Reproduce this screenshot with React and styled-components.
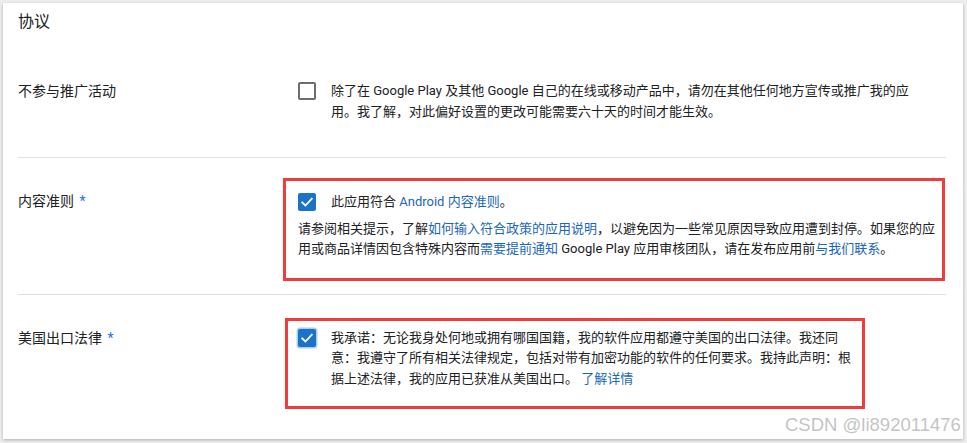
import React from 'react';
import styled, { createGlobalStyle } from 'styled-components';

const GlobalStyle = createGlobalStyle`
  html, body {
    margin: 0;
    padding: 0;
    background: #eeeeee;
  }
  body {
    font-family: Roboto, "Noto Sans CJK SC", sans-serif;
    color: #202124;
  }
`;

export default function App() {
  return (
    <Page>
      <GlobalStyle />
      <Card>
        <Title>协议</Title>

        <Row $top={47} $bottom={35} $divider>
          <Label $offset={0}>不参与推广活动</Label>
          <Plain>
            <CheckRow>
              <Checkbox />
              <CheckText>
                除了在 Google Play 及其他 Google 自己的在线或移动产品中，请勿在其他任何地方宣传或推广我的应用。我了解，对此偏好设置的更改可能需要六十天的时间才能生效。
              </CheckText>
            </CheckRow>
          </Plain>
        </Row>

        <Row $top={20} $bottom={13} $divider>
          <Label $offset={13}>
            内容准则 <Required>*</Required>
          </Label>
          <Highlight $pad="11px 3px 18px 12px" $shift={0} $width={662}>
            <CheckRow>
              <Checkbox checked />
              <CheckText>
                此应用符合 <Link>Android 内容准则</Link>。
              </CheckText>
            </CheckRow>
            <Note>
              请参阅相关提示，了解<Link>如何输入符合政策的应用说明</Link>，以避免因为一些常见原因导致应用遭到封停。如果您的应用或商品详情因包含特殊内容而<Link>需要提前通知</Link> Google Play 应用审核团队，请在发布应用前<Link>与我们联系</Link>。
            </Note>
          </Highlight>
        </Row>

        <Row $top={23} $bottom={30}>
          <Label $offset={10}>
            美国出口法律 <Required>*</Required>
          </Label>
          <Highlight $pad="7px 9px 16.5px 10px" $shift={2} $width={580}>
            <CheckRow>
              <Checkbox checked focused />
              <CheckText>
                我承诺：无论我身处何地或拥有哪国国籍，我的软件应用都遵守美国的出口法律。我还同意：我遵守了所有相关法律规定，包括对带有加密功能的软件的任何要求。我持此声明：根据上述法律，我的应用已获准从美国出口。 <Link>了解详情</Link>
              </CheckText>
            </CheckRow>
          </Highlight>
        </Row>
      </Card>
      <Watermark>CSDN @li892011476</Watermark>
    </Page>
  );
}

function Checkbox({ checked, focused }) {
  return (
    <Box $checked={checked} $focused={focused}>
      {checked && (
        <svg width="18" height="18" viewBox="0 0 18 18">
          <path d="M4.2 9.4 L7.4 12.5 L13.8 5.8" fill="none" stroke="#fff" strokeWidth="1.8" strokeLinecap="square" />
        </svg>
      )}
    </Box>
  );
}

const Page = styled.div`
  position: relative;
  width: 967px;
  height: 443px;
  padding: 3px 0 0 3px;
  box-sizing: border-box;
  overflow: hidden;
`;

const Card = styled.section`
  width: 960px;
  box-sizing: border-box;
  padding: 7px 17px 0 15px;
  background: #ffffff;
  box-shadow: 0 1px 3px rgba(0, 0, 0, 0.28);
`;

const Title = styled.h2`
  margin: 0;
  font-size: 16px;
  line-height: 24px;
  font-weight: 400;
  color: #202124;
`;

const Row = styled.div`
  display: grid;
  grid-template-columns: 265px 1fr;
  align-items: start;
  padding-top: ${(p) => p.$top}px;
  padding-bottom: ${(p) => p.$bottom}px;
  border-bottom: ${(p) => (p.$divider ? '1px solid #e0e0e0' : 'none')};
`;

const Label = styled.div`
  margin-top: ${(p) => p.$offset}px;
  font-size: 14px;
  line-height: 20.5px;
  color: #202124;
`;

const Required = styled.span`
  color: #1a73e8;
  margin-left: 2px;
`;

const Plain = styled.div`
  padding: 0 31px 0 15px;
`;

const Highlight = styled.div`
  box-sizing: border-box;
  width: ${(p) => p.$width}px;
  margin-left: ${(p) => p.$shift}px;
  padding: ${(p) => p.$pad};
  border: 3px solid #f23b3b;
`;

const CheckRow = styled.div`
  display: flex;
  align-items: flex-start;
  gap: 15px;
`;

const Box = styled.span`
  flex: none;
  display: flex;
  width: 18px;
  height: 18px;
  margin-top: 1px;
  box-sizing: border-box;
  border-radius: 2px;
  border: ${(p) => (p.$checked ? 'none' : '2px solid #6e6e6e')};
  background: ${(p) => (p.$checked ? '#1a73c8' : '#ffffff')};
  box-shadow: ${(p) => (p.$focused ? '0 0 0 1.5px rgba(26, 115, 200, 0.35)' : 'none')};
`;

const CheckText = styled.div`
  font-size: 13px;
  line-height: 20.5px;
  color: #202124;
`;

const Note = styled.p`
  margin: 6px 0 0;
  font-size: 13px;
  line-height: 20.5px;
  color: #202124;
`;

const Link = styled.span`
  color: #1a67b8;
`;

const Watermark = styled.div`
  position: absolute;
  left: 785px;
  top: 413px;
  font-family: "Liberation Sans", Arial, sans-serif;
  font-size: 18.5px;
  line-height: 24px;
  color: rgba(175, 175, 175, 0.75);
  white-space: nowrap;
`;
